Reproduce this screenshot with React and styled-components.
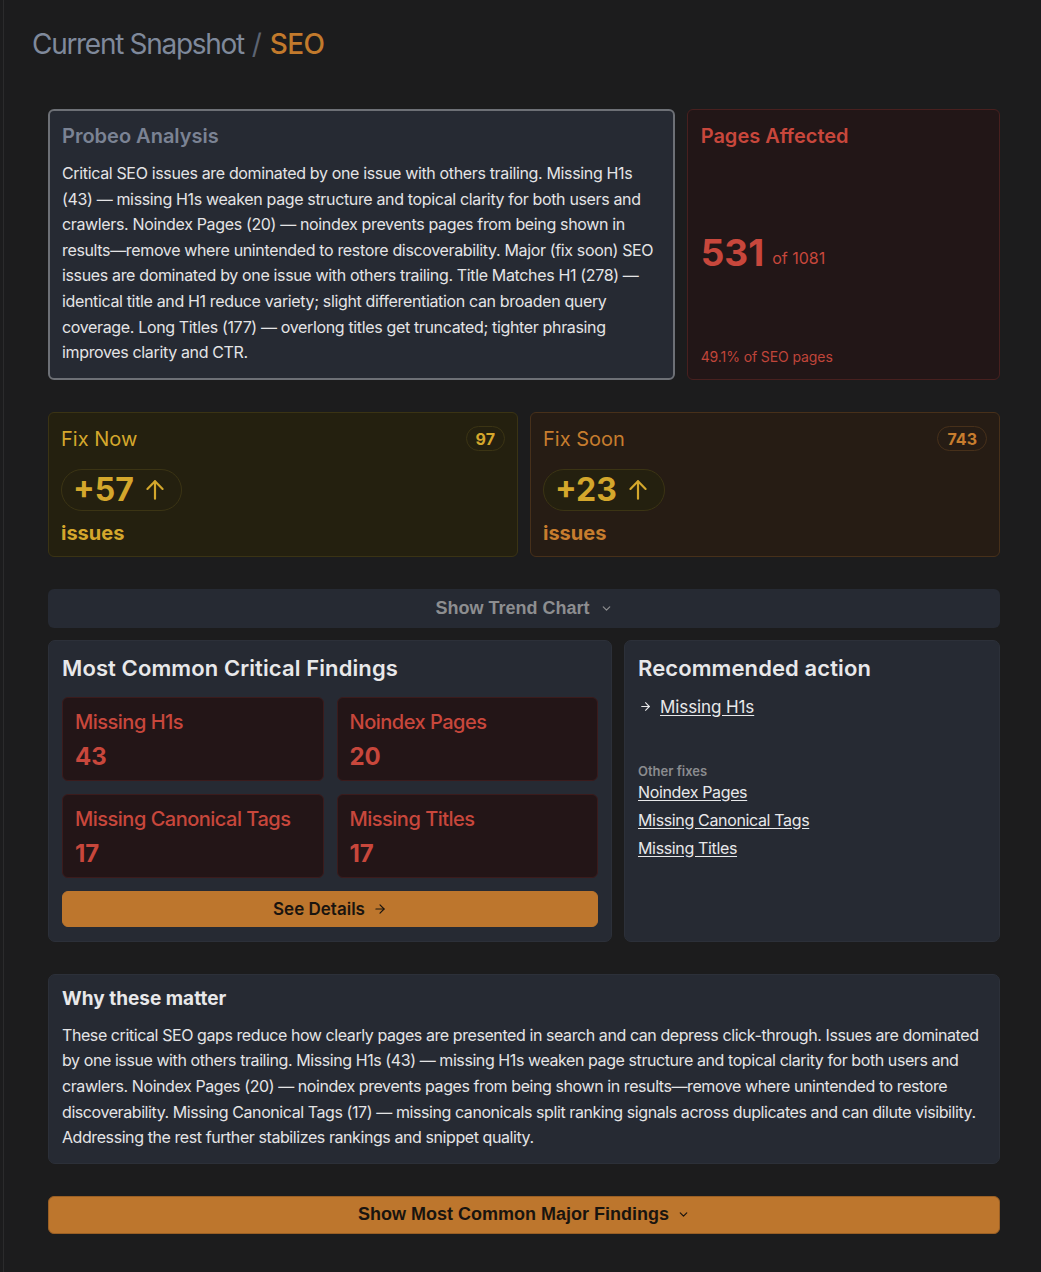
import React from "react";
import styled, { createGlobalStyle } from "styled-components";

const Global = createGlobalStyle`
  html, body { margin: 0; padding: 0; background: #1c1c1d; }
  body { font-family: Inter, "Noto Sans", sans-serif; color: #e6e6e6; -webkit-font-smoothing: antialiased; }
  * { box-sizing: border-box; }
`;

const Shell = styled.div`
  padding-left: 3px;
  min-height: 1272px;
`;

const Main = styled.main`
  border-left: 1px solid #2b2b2c;
  padding: 26px 25px 38px 28px;
  min-height: 1272px;
`;

const Crumb = styled.h1`
  margin: 0 0 47px;
  font-size: 28px;
  line-height: 36px;
  font-weight: 400;
  color: #7f899b;
  letter-spacing: -1.3px;
`;

const CrumbSep = styled.span`
  color: #5d6472;
  margin: 0 9px 0 8px;
`;

const CrumbCurrent = styled.span`
  color: #c27a2c;
  font-weight: 500;
  letter-spacing: -0.5px;
`;

const Content = styled.div`
  padding: 0 16px;
  display: flex;
  flex-direction: column;
`;

const TopGrid = styled.div`
  display: grid;
  grid-template-columns: 2fr 1fr;
  gap: 12px;
  margin-bottom: 32px;
`;

const AnalysisCard = styled.section`
  background: #262a33;
  border: 2px solid #6d7076;
  border-radius: 6px;
  padding: 11px 12px 12px;
`;

const AnalysisTitle = styled.h2`
  margin: 0;
  font-size: 20px;
  line-height: 28px;
  font-weight: 600;
  color: #7b8394;
`;

const Body = styled.p`
  margin: ${(p) => p.$mt || 0}px 0 0;
  font-size: 16px;
  line-height: 25.6px;
  letter-spacing: ${(p) => p.$ls || -0.35}px;
  color: #e4e4e6;
`;

const AffectedCard = styled.section`
  background: #221617;
  border: 1px solid #48201f;
  border-radius: 6px;
  padding: 12px 13px 12px;
  display: flex;
  flex-direction: column;
`;

const RedTitle = styled.h2`
  margin: 0;
  font-size: 20px;
  line-height: 28px;
  font-weight: 600;
  color: #c8473c;
`;

const BigStat = styled.div`
  flex: 1;
  display: flex;
  align-items: center;
  gap: 8px;
  color: #c8473c;
  padding-top: 10px;
`;

const BigNum = styled.span`
  font-size: 37px;
  font-weight: 700;
  line-height: 40px;
`;

const OfTotal = styled.span`
  font-size: 16px;
  padding-top: 10px;
`;

const Footnote = styled.div`
  font-size: 14px;
  line-height: 20px;
  letter-spacing: -0.1px;
  color: #c0453a;
`;

const FixGrid = styled.div`
  display: grid;
  grid-template-columns: 1fr 1fr;
  gap: 12px;
  margin-bottom: 32px;
`;

const FixCard = styled.section`
  background: ${(p) => p.$bg};
  border: 1px solid ${(p) => p.$border};
  border-radius: 6px;
  padding: 12px 12px 9px;
  color: ${(p) => p.$color};
`;

const FixHead = styled.div`
  display: flex;
  align-items: center;
  justify-content: space-between;
`;

const FixTitle = styled.h3`
  margin: 0;
  font-size: 20px;
  line-height: 28px;
  font-weight: 400;
`;

const CountBadge = styled.span`
  border: 1px solid ${(p) => p.$border};
  border-radius: 999px;
  padding: 0 9px;
  height: 25px;
  display: inline-flex;
  align-items: center;
  font-size: 16px;
  font-weight: 700;
`;

const DeltaPill = styled.div`
  display: inline-flex;
  align-items: center;
  gap: 8px;
  margin-top: 16px;
  height: 42px;
  padding: 0 13px 0 11px;
  border-radius: 999px;
  border: 1px solid #3b3414;
  background: ${(p) => p.$bg};
  color: #d4a72c;
  font-size: 32px;
  font-weight: 700;
  line-height: 1;
`;

const IssuesLabel = styled.div`
  margin-top: 8px;
  font-size: 20px;
  line-height: 28px;
  font-weight: 700;
`;

const TrendButton = styled.button`
  height: 39px;
  border: 0;
  border-radius: 6px;
  background: #262a33;
  color: #8d8e90;
  font-family: "Liberation Sans", Arial, sans-serif;
  font-size: 18px;
  font-weight: 700;
  display: flex;
  align-items: center;
  justify-content: center;
  gap: 10px;
  margin-bottom: 12px;
`;

const FindingsGrid = styled.div`
  display: grid;
  grid-template-columns: 3fr 2fr;
  gap: 12px;
  margin-bottom: 32px;
`;

const Panel = styled.section`
  background: #262a33;
  border: 1px solid #2c3039;
  border-radius: 7px;
  padding: ${(p) => p.$pad || "12px 13px 14px"};
  margin-bottom: ${(p) => p.$mb || 0}px;
`;

const PanelTitle = styled.h2`
  margin: 0;
  font-size: 22px;
  line-height: 30px;
  font-weight: 600;
  color: #e8e8ea;
  letter-spacing: 0.1px;
`;

const FindingList = styled.div`
  display: grid;
  grid-template-columns: 1fr 1fr;
  gap: 13px;
  margin-top: 14px;
`;

const FindingItem = styled.div`
  background: #231517;
  border: 1px solid #3b1b1c;
  border-radius: 6px;
  padding: 10px 12px 11px;
  color: #c8473c;
  height: 84px;
`;

const FindingName = styled.div`
  font-size: 20px;
  line-height: 28px;
  font-weight: 500;
  letter-spacing: -0.5px;
`;

const FindingCount = styled.div`
  font-size: 24px;
  line-height: 32px;
  font-weight: 700;
  margin-top: 5px;
`;

const OrangeButton = styled.button`
  width: 100%;
  height: ${(p) => p.$h || 36}px;
  margin-top: ${(p) => p.$mt || 0}px;
  border: 1px solid ${(p) => p.$border || "#bd762d"};
  border-radius: 6px;
  background: #bd762d;
  color: #19140f;
  font-family: ${(p) => (p.$classic ? `"Liberation Sans", Arial, sans-serif` : `Inter, sans-serif`)};
  font-size: ${(p) => (p.$classic ? 18 : 17)}px;
  font-weight: ${(p) => (p.$classic ? 700 : 600)};
  display: flex;
  align-items: center;
  justify-content: center;
  gap: 8px;
`;

const PrimaryLink = styled.a`
  display: flex;
  align-items: center;
  gap: 8px;
  margin-top: 12px;
  color: #e8e8ea;
  font-size: 17px;
  line-height: 24px;
  letter-spacing: -0.1px;
  text-decoration: underline;
  text-underline-offset: 2px;
  padding-left: 1px;
`;

const SubLabel = styled.div`
  margin-top: 43px;
  font-size: 13px;
  line-height: 18px;
  font-weight: 600;
  color: #8b8c8f;
`;

const LinkList = styled.div`
  display: flex;
  flex-direction: column;
  gap: 6px;
  margin-top: 1px;
`;

const OtherLink = styled.a`
  color: #e8e8ea;
  font-size: 16px;
  line-height: 22px;
  letter-spacing: -0.35px;
  text-decoration: underline;
  text-underline-offset: 2px;
  align-self: flex-start;
`;

const WhyTitle = styled.h3`
  margin: 0;
  font-size: 19px;
  line-height: 26px;
  font-weight: 700;
  color: #e8e8ea;
`;

const ArrowUp = ({ size = 26 }) => (
  <svg width={size} height={size} viewBox="0 0 24 24" fill="none" stroke="currentColor" strokeWidth="2" strokeLinecap="round" strokeLinejoin="round">
    <path d="M12 20V4" />
    <path d="M5 11l7-7 7 7" />
  </svg>
);

const ArrowRight = ({ size = 14 }) => (
  <svg width={size} height={size} viewBox="0 0 24 24" fill="none" stroke="currentColor" strokeWidth="2" strokeLinecap="round" strokeLinejoin="round">
    <path d="M5 12h14" />
    <path d="M12 5l7 7-7 7" />
  </svg>
);

const ChevronDown = ({ size = 13 }) => (
  <svg width={size} height={size} viewBox="0 0 24 24" fill="none" stroke="currentColor" strokeWidth="2.2" strokeLinecap="round" strokeLinejoin="round">
    <path d="M6 9l6 6 6-6" />
  </svg>
);

const yellow = { bg: "#24200f", border: "#3a3314", color: "#d4a72c" };
const orange = { bg: "#261c14", border: "#47301a", color: "#c77d2e" };

const findings = [
  ["Missing H1s", 43],
  ["Noindex Pages", 20],
  ["Missing Canonical Tags", 17],
  ["Missing Titles", 17],
];

export default function App() {
  return (
    <>
      <Global />
      <Shell>
        <Main>
          <Crumb>
            Current Snapshot<CrumbSep>/</CrumbSep>
            <CrumbCurrent>SEO</CrumbCurrent>
          </Crumb>
          <Content>
            <TopGrid>
              <AnalysisCard>
                <AnalysisTitle>Probeo Analysis</AnalysisTitle>
                <Body $mt={11}>
                  Critical SEO issues are dominated by one issue with others trailing. Missing H1s (43) — missing H1s weaken page structure and topical clarity for both users and crawlers. Noindex Pages (20) — noindex prevents pages from being shown in results—remove where unintended to restore discoverability. Major (fix soon) SEO issues are dominated by one issue with others trailing. Title Matches H1 (278) — identical title and H1 reduce variety; slight differentiation can broaden query coverage. Long Titles (177) — overlong titles get truncated; tighter phrasing improves clarity and CTR.
                </Body>
              </AnalysisCard>
              <AffectedCard>
                <RedTitle>Pages Affected</RedTitle>
                <BigStat>
                  <BigNum>531</BigNum>
                  <OfTotal>of 1081</OfTotal>
                </BigStat>
                <Footnote>49.1% of SEO pages</Footnote>
              </AffectedCard>
            </TopGrid>

            <FixGrid>
              <FixCard $bg={yellow.bg} $border={yellow.border} $color={yellow.color}>
                <FixHead>
                  <FixTitle>Fix Now</FixTitle>
                  <CountBadge $border="#3b3414">97</CountBadge>
                </FixHead>
                <DeltaPill $bg="transparent">
                  +57 <ArrowUp />
                </DeltaPill>
                <IssuesLabel>issues</IssuesLabel>
              </FixCard>
              <FixCard $bg={orange.bg} $border={orange.border} $color={orange.color}>
                <FixHead>
                  <FixTitle>Fix Soon</FixTitle>
                  <CountBadge $border="#47301a">743</CountBadge>
                </FixHead>
                <DeltaPill $bg="#24200f">
                  +23 <ArrowUp />
                </DeltaPill>
                <IssuesLabel>issues</IssuesLabel>
              </FixCard>
            </FixGrid>

            <TrendButton>
              Show Trend Chart <ChevronDown />
            </TrendButton>

            <FindingsGrid>
              <Panel>
                <PanelTitle>Most Common Critical Findings</PanelTitle>
                <FindingList>
                  {findings.map(([name, n]) => (
                    <FindingItem key={name}>
                      <FindingName>{name}</FindingName>
                      <FindingCount>{n}</FindingCount>
                    </FindingItem>
                  ))}
                </FindingList>
                <OrangeButton $mt={13}>
                  See Details <ArrowRight />
                </OrangeButton>
              </Panel>
              <Panel>
                <PanelTitle>Recommended action</PanelTitle>
                <PrimaryLink>
                  <ArrowRight size={13} />
                  <span>Missing H1s</span>
                </PrimaryLink>
                <SubLabel>Other fixes</SubLabel>
                <LinkList>
                  <OtherLink>Noindex Pages</OtherLink>
                  <OtherLink>Missing Canonical Tags</OtherLink>
                  <OtherLink>Missing Titles</OtherLink>
                </LinkList>
              </Panel>
            </FindingsGrid>

            <Panel $pad="11px 11px 12px 13px" $mb={32}>
              <WhyTitle>Why these matter</WhyTitle>
              <Body $mt={11} $ls={-0.42}>
                These critical SEO gaps reduce how clearly pages are presented in search and can depress click-through. Issues are dominated by one issue with others trailing. Missing H1s (43) — missing H1s weaken page structure and topical clarity for both users and crawlers. Noindex Pages (20) — noindex prevents pages from being shown in results—remove where unintended to restore discoverability. Missing Canonical Tags (17) — missing canonicals split ranking signals across duplicates and can dilute visibility. Addressing the rest further stabilizes rankings and snippet quality.
              </Body>
            </Panel>

            <OrangeButton $classic $h={38} $border="#9a5f24">
              Show Most Common Major Findings <ChevronDown />
            </OrangeButton>
          </Content>
        </Main>
      </Shell>
    </>
  );
}
